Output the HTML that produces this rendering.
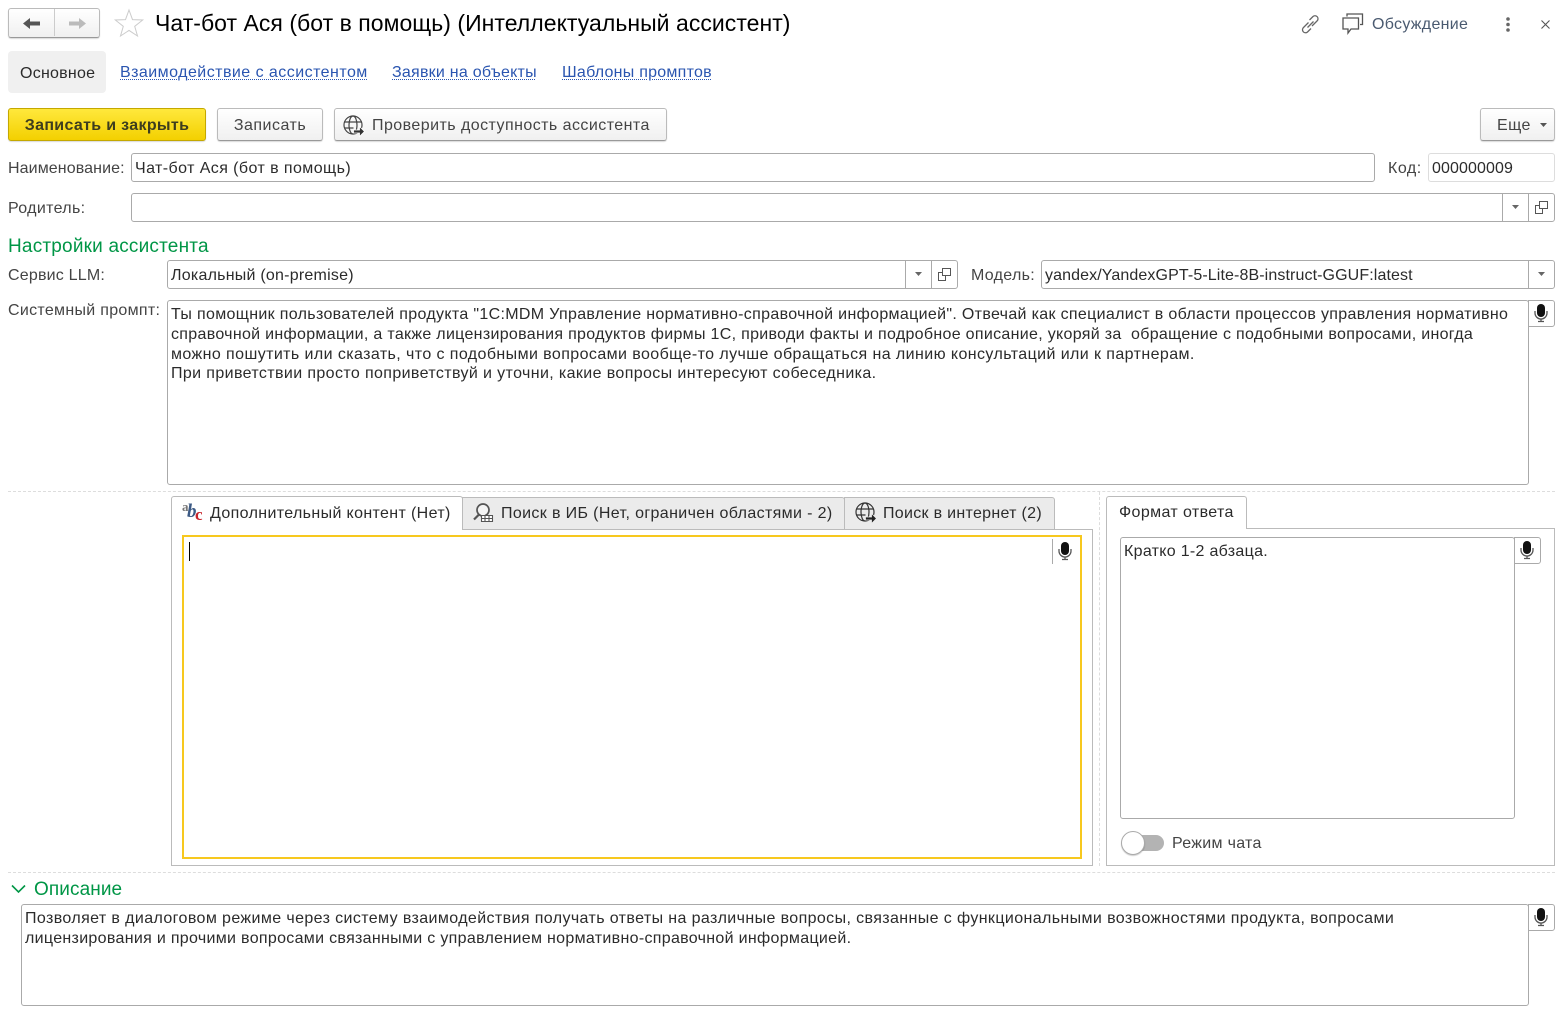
<!DOCTYPE html>
<html lang="ru"><head><meta charset="utf-8"><title>Чат-бот Ася</title>
<style>
*{box-sizing:border-box}
html,body{margin:0;padding:0;background:#fff}
body{position:relative;width:1565px;height:1014px;overflow:hidden;font:16px/20px "Liberation Sans",Arial,sans-serif;color:#2b2b2b}
.a{position:absolute;white-space:pre}
.f{position:absolute;border:1px solid #aaa;border-radius:3px;background:#fff}
.btn{position:absolute;height:33px;border:1px solid #bbb;border-bottom-color:#999;border-radius:3px;background:linear-gradient(#fff,#f0f0f0);box-shadow:0 1px 1px rgba(0,0,0,.15);text-align:center;line-height:33px;color:#444;white-space:pre}
.lbl{color:#444}
.lnk{color:#2a55b0;line-height:18px;text-decoration:underline dotted 1px;text-underline-offset:2px}
.g{color:#009646}
.v{position:absolute;width:1px;background:#aaa}
.mic{position:absolute;width:27px;height:27px;border:1px solid #aaa;border-radius:0 3px 3px 0;background:#fff}
.dh{position:absolute;height:0;border-top:1px dashed #ddd}
.dv{position:absolute;width:0;border-left:1px dashed #ddd}
svg{position:absolute;overflow:visible}
span.l{display:block}
</style></head><body>

<!-- nav -->
<div class="btn" style="left:8px;top:8px;width:92px;height:30px"></div>
<div class="v" style="left:54px;top:9px;height:27px;background:#ccc"></div>
<svg style="left:23px;top:17px" width="18" height="13" viewBox="0 0 18 13"><path d="M0 6.500L7 1v3.500h10v4H7V12z" fill="#555"/></svg>
<svg style="left:68px;top:17px" width="18" height="13" viewBox="0 0 18 13"><path d="M18 6.500L11 1v3.500H1v4h10V12z" fill="#bbb"/></svg>
<svg style="left:114px;top:9px" width="30" height="28" viewBox="0 0 30 28"><path d="M15 1l3.500 9.600 10.200.4-8 6.300 2.800 9.700L15 21.400 6.500 27l2.800-9.700-8-6.300 10.200-.4z" fill="#fff" stroke="#ccc"/></svg>
<div class="a" style="left:155px;top:9px;font-size:23px;line-height:28px;color:#000;letter-spacing:.04px">Чат-бот Ася (бот в помощь) (Интеллектуальный ассистент)</div>

<!-- top right -->
<svg style="left:1300px;top:14px" width="21" height="21" viewBox="0 0 21 21" fill="none" stroke="#666" stroke-width="1.300"><path d="M8.500 8.500l-5 5a3 3 0 0 0 4 4.500l3.500-3.500"/><path d="M12 12l5-5a3 3 0 0 0-4-4.500L9.500 6"/><path d="M7.500 13.500l6-6"/></svg>
<svg style="left:1342px;top:13px" width="22" height="21" viewBox="0 0 22 21" fill="none" stroke="#555" stroke-width="1.300"><path d="M5 3.500V1h15.500v10.500H18"/><path d="M1 5h15.500v11H9l-3 4v-4H1z" fill="#fff"/></svg>
<div class="a" style="left:1372px;top:15px;color:#4a5a70;letter-spacing:.3px">Обсуждение</div>
<svg style="left:1505px;top:17px" width="6" height="15" viewBox="0 0 6 15"><circle cx="3" cy="2" r="1.800" fill="#666"/><circle cx="3" cy="7.500" r="1.800" fill="#666"/><circle cx="3" cy="13" r="1.800" fill="#666"/></svg>
<svg style="left:1541px;top:20px" width="9" height="9" viewBox="0 0 9 9"><path d="M.5.500l8 8M8.500.500l-8 8" stroke="#555" stroke-width="1.100"/></svg>

<!-- tabs -->
<div style="position:absolute;left:8px;top:51px;width:98px;height:42px;background:#f0f0f0;border-radius:4px"></div>
<div class="a" style="left:20px;top:64px;letter-spacing:.25px">Основное</div>
<div class="a lnk" style="left:120px;top:64px;letter-spacing:.46px">Взаимодействие с ассистентом</div>
<div class="a lnk" style="left:392px;top:64px;letter-spacing:.24px">Заявки на объекты</div>
<div class="a lnk" style="left:562px;top:64px;letter-spacing:.25px">Шаблоны промптов</div>

<!-- command bar -->
<div class="btn" style="left:8px;top:108px;width:198px;background:linear-gradient(#ffe83c,#f3d000);border-color:#c4a800;font-weight:bold;color:#3d3d1e;letter-spacing:.33px">Записать и закрыть</div>
<div class="btn" style="left:217px;top:108px;width:106px;letter-spacing:.5px">Записать</div>
<div class="btn" style="left:334px;top:108px;width:333px;text-align:left;padding-left:37px;letter-spacing:.45px">Проверить доступность ассистента</div>
<svg style="left:343px;top:115px" width="21" height="21" viewBox="0 0 21 21" fill="none" stroke="#444" stroke-width="1.200"><circle cx="10" cy="10" r="9"/><ellipse cx="10" cy="10" rx="4" ry="9"/><path d="M1.500 7h17M1.500 13h9"/><path d="M10.500 15h6v-3.500l5 5-5 5V18h-6z" fill="#333" stroke="#fff" stroke-width=".8"/></svg>
<div class="btn" style="left:1480px;top:108px;width:75px;text-align:left;padding-left:16px;letter-spacing:.4px">Еще</div>
<svg style="left:1540px;top:123px" width="7" height="4" viewBox="0 0 7 4"><path d="M0 0h7L3.500 4z" fill="#555"/></svg>

<!-- row 1 -->
<div class="a lbl" style="left:8px;top:159px;letter-spacing:.1px">Наименование:</div>
<div class="f" style="left:131px;top:153px;width:1244px;height:29px"></div>
<div class="a" style="left:135px;top:159px;letter-spacing:.42px">Чат-бот Ася (бот в помощь)</div>
<div class="a lbl" style="left:1388px;top:159px;letter-spacing:.5px">Код:</div>
<div class="f" style="left:1428px;top:153px;width:127px;height:29px;border-color:#ddd"></div>
<div class="a" style="left:1432px;top:159px;letter-spacing:.1px">000000009</div>

<!-- row 2 -->
<div class="a lbl" style="left:8px;top:199px;letter-spacing:.33px">Родитель:</div>
<div class="f" style="left:131px;top:193px;width:1424px;height:29px"></div>
<div class="v" style="left:1502px;top:193px;height:29px"></div>
<div class="v" style="left:1528px;top:193px;height:29px"></div>
<svg style="left:1512px;top:205px" width="7" height="4" viewBox="0 0 7 4"><path d="M0 0h7L3.500 4z" fill="#666"/></svg>
<svg style="left:1535px;top:201px" width="13" height="13" viewBox="0 0 13 13" fill="none" stroke="#555"><path d="M4.500.500h8v7h-8zM4.500 4.500h-4v8h7V8"/></svg>

<div class="a g" style="left:8px;top:236px;font-size:19px;line-height:22px;letter-spacing:.2px">Настройки ассистента</div>

<!-- row 3 -->
<div class="a lbl" style="left:8px;top:266px;letter-spacing:.2px">Сервис LLM:</div>
<div class="f" style="left:167px;top:260px;width:791px;height:29px"></div>
<div class="a" style="left:171px;top:266px;letter-spacing:.23px">Локальный (on-premise)</div>
<div class="v" style="left:905px;top:260px;height:29px"></div>
<div class="v" style="left:931px;top:260px;height:29px"></div>
<svg style="left:915px;top:272px" width="7" height="4" viewBox="0 0 7 4"><path d="M0 0h7L3.500 4z" fill="#666"/></svg>
<svg style="left:938px;top:268px" width="13" height="13" viewBox="0 0 13 13" fill="none" stroke="#555"><path d="M4.500.500h8v7h-8zM4.500 4.500h-4v8h7V8"/></svg>
<div class="a lbl" style="left:971px;top:266px;letter-spacing:.3px">Модель:</div>
<div class="f" style="left:1041px;top:260px;width:514px;height:29px"></div>
<div class="a" style="left:1045px;top:266px;letter-spacing:.11px">yandex/YandexGPT-5-Lite-8B-instruct-GGUF:latest</div>
<div class="v" style="left:1528px;top:260px;height:29px"></div>
<svg style="left:1538px;top:272px" width="7" height="4" viewBox="0 0 7 4"><path d="M0 0h7L3.500 4z" fill="#666"/></svg>

<!-- system prompt -->
<div class="a lbl" style="left:8px;top:301px;letter-spacing:.3px">Системный промпт:</div>
<div class="f" style="left:167px;top:300px;width:1362px;height:185px"></div>
<div class="a" style="left:171px;top:305px;line-height:19.800px"><span class="l" style="letter-spacing:.327px">Ты помощник пользователей продукта "1С:MDM Управление нормативно-справочной информацией". Отвечай как специалист в области процессов управления нормативно</span><span class="l" style="letter-spacing:.307px">справочной информации, а также лицензирования продуктов фирмы 1С, приводи факты и подробное описание, укоряй за  обращение с подобными вопросами, иногда</span><span class="l" style="letter-spacing:.41px">можно пошутить или сказать, что с подобными вопросами вообще-то лучше обращаться на линию консультаций или к партнерам.</span><span class="l" style="letter-spacing:.38px">При приветствии просто поприветствуй и уточни, какие вопросы интересуют собеседника.</span></div>
<div class="mic" style="left:1528px;top:300px"></div>
<svg style="left:1534px;top:304px" width="14" height="18" viewBox="0 0 14 18"><rect x="3" y="0" width="8" height="13" rx="4" fill="#111"/><path d="M1 7v2a6 6 0 0 0 12 0V7M7 15v2M4 17.500h6" fill="none" stroke="#555" stroke-width="1.300"/></svg>

<div class="dh" style="left:8px;top:491px;width:1547px"></div>
<div class="dv" style="left:1099px;top:492px;height:374px"></div>

<!-- left tabs -->
<div style="position:absolute;left:171px;top:529px;width:922px;height:337px;border:1px solid #bbb"></div>
<div style="position:absolute;left:462px;top:497px;width:383px;height:33px;background:#ebebeb;border:1px solid #bbb;border-radius:0 3px 0 0"></div>
<div style="position:absolute;left:844px;top:497px;width:211px;height:33px;background:#ebebeb;border:1px solid #bbb;border-radius:0 3px 0 0"></div>
<div style="position:absolute;left:171px;top:496px;width:292px;height:34px;background:#fff;border:1px solid #bbb;border-bottom:0;border-radius:3px 3px 0 0"></div>
<div class="a" style="left:182px;top:500px;font:bold 13px/13px 'Liberation Serif',serif;color:#777">a</div>
<div class="a" style="left:187px;top:502px;font:italic bold 19px/19px 'Liberation Serif',serif;color:#3c5a85">b</div>
<div class="a" style="left:195px;top:507px;font:bold 17px/16px 'Liberation Serif',serif;color:#c8232a">c</div>
<div class="a" style="left:210px;top:504px;letter-spacing:.36px">Дополнительный контент (Нет)</div>
<svg style="left:473px;top:503px" width="20" height="19" viewBox="0 0 20 19" fill="none" stroke="#555" stroke-width="1.100"><circle cx="10" cy="7" r="6" stroke-width="1.700" fill="#f4f4f4"/><path d="M6 11.500l-5 5" stroke-width="2.200"/><path d="M8.500 12.500h11v6h-11zM8.500 15.500h11M12 12.500v6M16 12.500v6" fill="#fff"/></svg>
<div class="a" style="left:501px;top:504px;letter-spacing:.365px">Поиск в ИБ (Нет, ограничен областями - 2)</div>
<svg style="left:855px;top:502px" width="21" height="21" viewBox="0 0 21 21" fill="none" stroke="#333" stroke-width="1.200"><circle cx="10" cy="10" r="9"/><ellipse cx="10" cy="10" rx="4" ry="9"/><path d="M1.500 7h17M1.500 13h9"/><path d="M10.500 15h6v-3.500l5 5-5 5V18h-6z" fill="#222" stroke="#ebebeb" stroke-width=".8"/></svg>
<div class="a" style="left:883px;top:504px;letter-spacing:.3px">Поиск в интернет (2)</div>

<div style="position:absolute;left:182px;top:535px;width:900px;height:324px;border:2px solid #f7c81e"></div>
<div style="position:absolute;left:189px;top:542px;width:1px;height:19px;background:#000"></div>
<div class="v" style="left:1052px;top:539px;height:25px"></div>
<svg style="left:1058px;top:542px" width="14" height="18" viewBox="0 0 14 18"><rect x="3" y="0" width="8" height="13" rx="4" fill="#111"/><path d="M1 7v2a6 6 0 0 0 12 0V7M7 15v2M4 17.500h6" fill="none" stroke="#555" stroke-width="1.300"/></svg>

<!-- right tab -->
<div style="position:absolute;left:1106px;top:528px;width:449px;height:338px;border:1px solid #bbb"></div>
<div style="position:absolute;left:1106px;top:496px;width:141px;height:33px;background:#fff;border:1px solid #bbb;border-bottom:0;border-radius:3px 3px 0 0"></div>
<div class="a" style="left:1119px;top:503px;letter-spacing:.38px">Формат ответа</div>
<div class="f" style="left:1120px;top:537px;width:395px;height:282px"></div>
<div class="a" style="left:1124px;top:542px;letter-spacing:.3px">Кратко 1-2 абзаца.</div>
<div class="mic" style="left:1514px;top:537px"></div>
<svg style="left:1520px;top:541px" width="14" height="18" viewBox="0 0 14 18"><rect x="3" y="0" width="8" height="13" rx="4" fill="#111"/><path d="M1 7v2a6 6 0 0 0 12 0V7M7 15v2M4 17.500h6" fill="none" stroke="#555" stroke-width="1.300"/></svg>
<div style="position:absolute;left:1124px;top:835px;width:40px;height:16px;border-radius:8px;background:#b3b3b3"></div>
<div style="position:absolute;left:1121px;top:831px;width:24px;height:24px;border-radius:50%;background:#fff;border:1px solid #aaa;box-shadow:0 1px 1px rgba(0,0,0,.2)"></div>
<div class="a lbl" style="left:1172px;top:834px;letter-spacing:.3px">Режим чата</div>

<div class="dh" style="left:8px;top:872px;width:1547px"></div>

<!-- description -->
<svg style="left:11px;top:884px" width="15" height="10" viewBox="0 0 15 10"><path d="M1 1.500l6.500 6.500L14 1.500" fill="none" stroke="#009646" stroke-width="1.600"/></svg>
<div class="a g" style="left:34px;top:879px;font-size:19px;line-height:22px;letter-spacing:.1px">Описание</div>
<div class="f" style="left:21px;top:904px;width:1508px;height:102px"></div>
<div class="a" style="left:25px;top:909px"><span class="l" style="letter-spacing:.387px">Позволяет в диалоговом режиме через систему взаимодействия получать ответы на различные вопросы, связанные с функциональными возвожностями продукта, вопросами</span><span class="l" style="letter-spacing:.31px">лицензирования и прочими вопросами связанными с управлением нормативно-справочной информацией.</span></div>
<div class="mic" style="left:1528px;top:904px"></div>
<svg style="left:1534px;top:908px" width="14" height="18" viewBox="0 0 14 18"><rect x="3" y="0" width="8" height="13" rx="4" fill="#111"/><path d="M1 7v2a6 6 0 0 0 12 0V7M7 15v2M4 17.500h6" fill="none" stroke="#555" stroke-width="1.300"/></svg>
</body></html>
